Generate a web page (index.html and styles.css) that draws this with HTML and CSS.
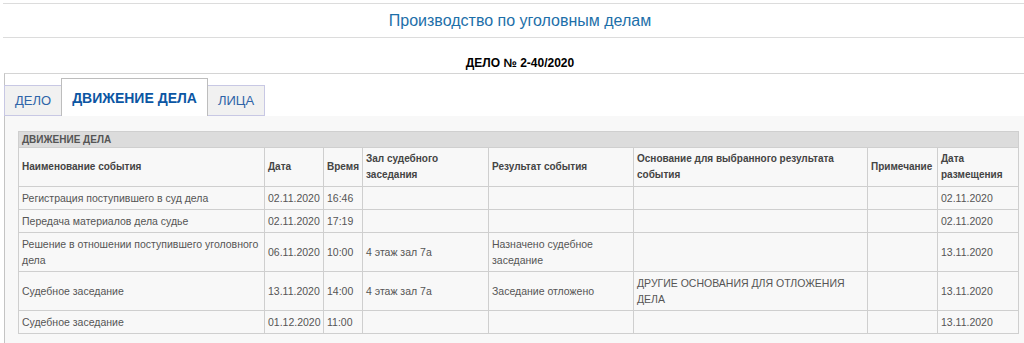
FILE: index.html
```html
<!DOCTYPE html>
<html lang="ru">
<head>
<meta charset="utf-8">
<title>Производство по уголовным делам</title>
<link rel="stylesheet" href="styles.css">
</head>
<body>
<div class="page">
  <div class="title-bar"><h1 class="title">Производство по уголовным делам</h1></div>
  <div class="case-no">ДЕЛО № 2-40/2020</div>
  <div class="box">
    <ul class="tabs">
      <li class="tab">ДЕЛО</li>
      <li class="tab active">ДВИЖЕНИЕ ДЕЛА</li>
      <li class="tab">ЛИЦА</li>
    </ul>
    <div class="content">
      <table class="grid">
        <colgroup>
          <col class="c1"><col class="c2"><col class="c3"><col class="c4"><col class="c5"><col class="c6"><col class="c7"><col class="c8">
        </colgroup>
        <thead>
          <tr class="caption-row"><th colspan="8">ДВИЖЕНИЕ ДЕЛА</th></tr>
          <tr class="head-row">
            <th>Наименование события</th>
            <th>Дата</th>
            <th>Время</th>
            <th>Зал судебного заседания</th>
            <th>Результат события</th>
            <th>Основание для выбранного результата события</th>
            <th>Примечание</th>
            <th>Дата размещения</th>
          </tr>
        </thead>
        <tbody>
          <tr><td>Регистрация поступившего в суд дела</td><td>02.11.2020</td><td>16:46</td><td></td><td></td><td></td><td></td><td>02.11.2020</td></tr>
          <tr><td>Передача материалов дела судье</td><td>02.11.2020</td><td>17:19</td><td></td><td></td><td></td><td></td><td>02.11.2020</td></tr>
          <tr><td>Решение в отношении поступившего уголовного дела</td><td>06.11.2020</td><td>10:00</td><td>4 этаж зал 7а</td><td>Назначено судебное заседание</td><td></td><td></td><td>13.11.2020</td></tr>
          <tr><td>Судебное заседание</td><td>13.11.2020</td><td>14:00</td><td>4 этаж зал 7а</td><td>Заседание отложено</td><td>ДРУГИЕ ОСНОВАНИЯ ДЛЯ ОТЛОЖЕНИЯ ДЕЛА</td><td></td><td>13.11.2020</td></tr>
          <tr><td>Судебное заседание</td><td>01.12.2020</td><td>11:00</td><td></td><td></td><td></td><td></td><td>13.11.2020</td></tr>
        </tbody>
      </table>
    </div>
  </div>
</div>
</body>
</html>
```
FILE: styles.css
```css
html, body {
  margin: 0;
  padding: 0;
  background: #fff;
  overflow: hidden;
}
body {
  font-family: "Liberation Sans", Arial, sans-serif;
  color: #444;
}
.page {
  width: 1034px;
  padding: 3px 0 0 3px;
}
.title-bar {
  border-top: 1px solid #dcdcdc;
  border-bottom: 1px solid #dcdcdc;
  height: 33px;
  display: flex;
  align-items: center;
  justify-content: center;
}
.title {
  margin: 0;
  font-size: 16px;
  font-weight: normal;
  color: #1d6fa9;
}
.case-no {
  margin-top: 18px;
  height: 17px;
  text-align: center;
  font-size: 12px;
  font-weight: bold;
  color: #000;
}
.box {
  margin-left: 1px;
  border-top: 1px solid #d4d4d4;
  border-left: 1px solid #c4c4c4;
  padding-top: 4px;
}
.tabs {
  list-style: none;
  margin: 0 0 0 -1px;
  padding: 0;
  display: flex;
  align-items: flex-end;
}
.tab {
  box-sizing: border-box;
  height: 31px;
  padding: 0 10px;
  display: flex;
  align-items: center;
  font-size: 13px;
  color: #2e64a8;
  background: #f1f1f1;
  border: 1px solid #c8c8e4;
  margin-right: -1px;
}
.tab.active {
  height: 38px;
  padding: 0 10px;
  font-size: 14px;
  font-weight: bold;
  color: #0b56a3;
  background: #fff;
  border-color: #bdbdbd;
  border-bottom: none;
  position: relative;
  z-index: 1;
}
.content {
  background: #f8f8f8;
  padding: 15px 0 40px 13px;
}
.grid {
  border-collapse: collapse;
  table-layout: fixed;
  width: 1000px;
  font-size: 10.5px;
  line-height: 16px;
  color: #555;
}
.c1 { width: 246px; }
.c2 { width: 59px; }
.c3 { width: 39px; }
.c4 { width: 126px; }
.c5 { width: 145px; }
.c6 { width: 234px; }
.c7 { width: 70px; }
.c8 { width: 81px; }
.grid th, .grid td {
  border: 1px solid #cfcfcf;
  padding: 3px 2px 3px 3px;
  text-align: left;
  vertical-align: middle;
}
.grid th {
  font-size: 10px;
  font-weight: bold;
  color: #444;
}
.caption-row th {
  background: #dcdcdc;
  padding: 0 3px;
  line-height: 15px;
  color: #555;
}
.head-row th {
  padding-top: 3px;
  padding-bottom: 3px;
}
```
